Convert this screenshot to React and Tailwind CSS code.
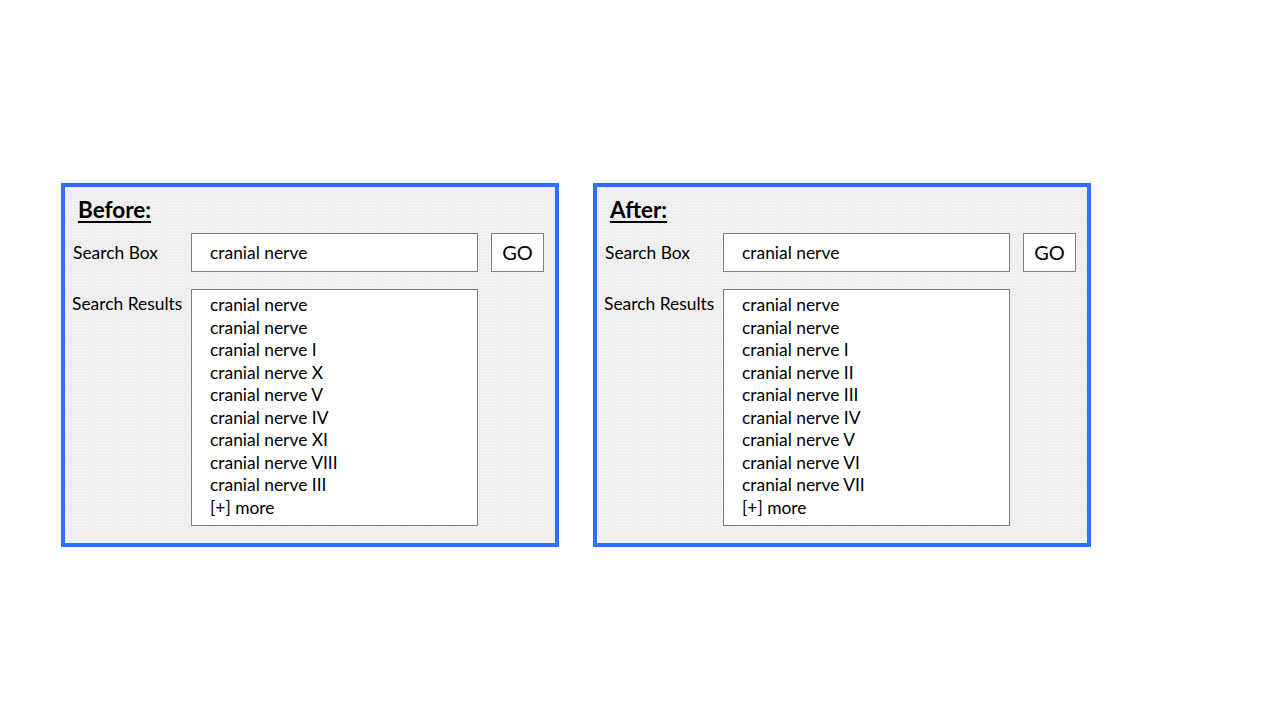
import React from "react";

const font = { fontFamily: "Lato, 'Open Sans', sans-serif" };

function Panel({ title, results }) {
  return (
    <div className="w-[498px] h-[364px] border-4 border-[#2f6fff] bg-[#eeeeee] bg-[radial-gradient(#fafafa_0.6px,transparent_0.8px)] bg-[size:3px_3px] text-black">
      <div className="pl-[13px] pt-[10px] h-[46px]">
        <span className="text-[22.5px] leading-[26px] font-bold underline underline-offset-[3px] decoration-2">{title}</span>
      </div>
      <div className="flex items-center">
        <div className="w-[126px] pl-[8px] pt-[1px] text-[17.4px]">Search Box</div>
        <div className="w-[287px] h-[39px] border border-[#7f7f7f] bg-white flex items-center pl-[18px] pt-[1px] text-[17.4px]">
          cranial nerve
        </div>
        <div className="ml-[13px] w-[53px] h-[39px] border border-[#7f7f7f] bg-white flex items-center justify-center pb-[1px] text-[20px]">
          GO
        </div>
      </div>
      <div className="flex mt-[17px]">
        <div className="w-[126px] pl-[7px] pt-[4px] text-[17.4px] leading-[22.5px]">Search Results</div>
        <div className="w-[287px] h-[237px] border border-[#7f7f7f] bg-white pl-[18px] pt-[4px] text-[17.4px] leading-[22.5px]">
          {results.map((r, i) => (
            <div key={i}>{r}</div>
          ))}
          <div>[+] more</div>
        </div>
      </div>
    </div>
  );
}

export default function App() {
  const before = [
    "cranial nerve",
    "cranial nerve",
    "cranial nerve I",
    "cranial nerve X",
    "cranial nerve V",
    "cranial nerve IV",
    "cranial nerve XI",
    "cranial nerve VIII",
    "cranial nerve III",
  ];
  const after = [
    "cranial nerve",
    "cranial nerve",
    "cranial nerve I",
    "cranial nerve II",
    "cranial nerve III",
    "cranial nerve IV",
    "cranial nerve V",
    "cranial nerve VI",
    "cranial nerve VII",
  ];
  return (
    <div style={font} className="w-[1280px] h-[720px] bg-white pt-[183px] pl-[61px] flex gap-[34px] items-start">
      <Panel title="Before:" results={before} />
      <Panel title="After:" results={after} />
    </div>
  );
}
